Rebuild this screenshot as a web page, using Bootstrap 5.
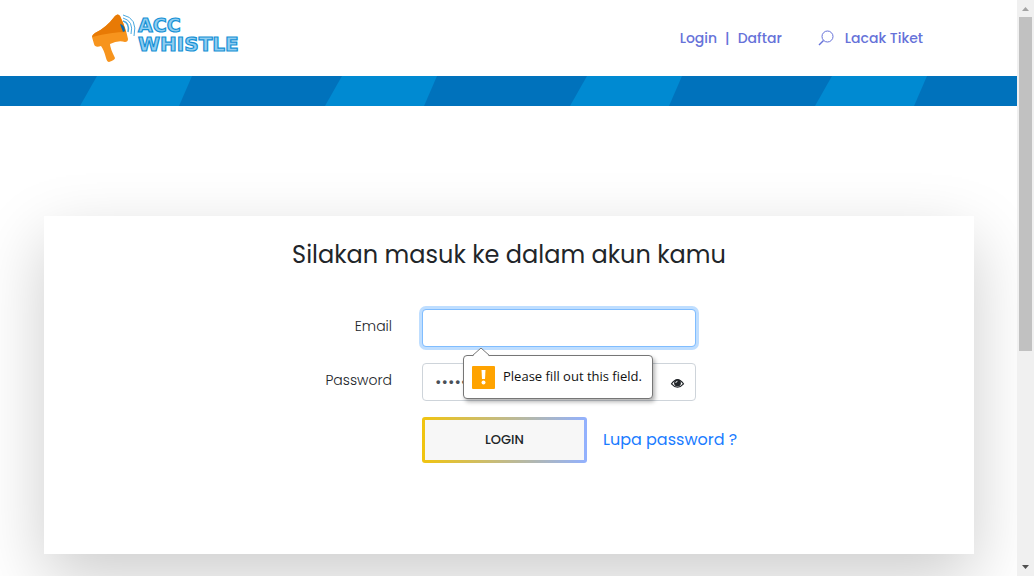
<!DOCTYPE html>
<html lang="id">
<head>
<meta charset="utf-8">
<meta name="viewport" content="width=device-width, initial-scale=1">
<title>ACC Whistle</title>
<link rel="stylesheet" href="https://cdn.jsdelivr.net/npm/bootstrap@5.3.0/dist/css/bootstrap.min.css">
<style>
  body { font-family: Poppins, Inter, sans-serif; font-size: 14px; color: #212529; background: #fff; }
  .site-header { height: 76px; padding: 0 94px 0 92px; }
  .site-header a { color: #6672d9; font-weight: 500; text-decoration: none; }
  .site-menu { color: #6672d9; font-weight: 500; }
  .stripes { height: 30px; }
  .login-panel { margin: 110px 43px 0 44px; padding: 23px 0 91px; background: #fff; box-shadow: 0 24px 64px rgba(0,0,0,.2); }
  .login-title { font-size: 24px; line-height: 32px; margin-bottom: 38px; font-weight: 400; }
  .form-line { display: grid; grid-template-columns: 363fr 304fr 263fr; margin-bottom: 16px; }
  .form-line > * { padding-left: 15px; padding-right: 15px; }
  .form-line label { text-align: right; padding-top: 7px; line-height: 21px; font-weight: 300; }
  .form-line .form-control { height: 38px; border-color: #ced4da; border-radius: 4px; font-size: 14px; font-weight: 500; color: #495057; padding: 6px 12px; }
  .form-line .is-active, .form-line .is-active:focus { border-color: #80bdff; box-shadow: 0 0 0 3px #bfdeff; }
  .actions { grid-column: 2 / 4; }
  .btn-login { width: 165px; height: 46px; border: 3px solid transparent; border-radius: 3px; font-size: 13px; font-weight: 500; color: #212529;
    background: linear-gradient(#f7f7f7, #f7f7f7) padding-box, linear-gradient(90deg, #f1c40f, #92b1ff) border-box; }
  .forgot { font-size: 16px; color: #1a7cff; text-decoration: none; }
  .eye-btn { right: 26px; top: 0; height: 40px; line-height: 0; }
  .hint { left: 56px; top: 46px; height: 44px; padding: 0 10px 0 8px; z-index: 5; background: #fff; border: 1px solid #767676; border-radius: 4px; box-shadow: 2px 3px 4px rgba(0,0,0,.3); font-family: "Open Sans", sans-serif; font-size: 13px; color: #111; white-space: nowrap; }
  .hint-arrow { left: 8px; top: -8px; }
  .scroll-rail { width: 17px; background: #f0f0f0; padding: 0 2px 0 2px; }
  .scroll-thumb { flex: 334 0 0; background: #c1c1c1; }
  .scroll-rest { flex: 208 0 0; }
  .scroll-end { height: 17px; }
</style>
</head>
<body class="d-flex vh-100 overflow-hidden">
<div class="flex-grow-1 overflow-hidden">
  <header class="site-header d-flex align-items-center justify-content-between">
    <a href="#" aria-label="ACC Whistle">
      <svg class="d-block" width="148" height="52" viewBox="0 0 148 52">
        <path d="M0 25Q0 23 3 21Q14 16 23 4Q26 1 28 4Q34 16 36 27Q36 30 33 30Q26 28 18 32Q18 36 23 46Q23 48 17 50Q15 50 14 46Q12 38 9 34Q3 36 2 32Z" fill="#f7941d"/>
        <path d="M0 25Q0 23 3 21Q14 16 23 4Q26 1 28 4Q32 12 34 20Q20 20 0 25Z" fill="#e87a05"/>
        <path d="M28 12Q33 13 33 19L31 20Z" fill="#0869ad"/>
        <g fill="none" stroke="#4aa8df"><path d="M31 9Q38 11 36 20" stroke-width="1.5"/><path d="M31 6Q42 9 39 22M31 3Q46 6 42 24"/></g>
        <g fill="#8fcdf0" stroke="#1591d6" stroke-width="1.2" font-family="DejaVu Sans, sans-serif" font-weight="700"><text x="46" y="20" font-size="19">ACC</text><text x="46" y="39" font-size="20">WHISTLE</text></g>
      </svg>
    </a>
    <nav class="site-menu d-flex align-items-center">
      <a href="#">Login</a><span class="px-2">|</span><a href="#">Daftar</a>
      <a href="#" class="d-flex align-items-center ms-4 ps-2">
        <svg class="ms-1 me-2" width="19" height="16" viewBox="0 0 19 16" fill="none" stroke="#6672d9"><circle cx="9.5" cy="6.5" r="5.5"/><path d="M5.5 10.5L1 15" stroke-width="1.5"/></svg>Lacak Tiket</a>
    </nav>
  </header>
  <svg class="stripes d-block w-100" aria-hidden="true">
    <defs><pattern id="band" width="245" height="30" patternUnits="userSpaceOnUse"><rect width="245" height="30" fill="#0072bc"/><path d="M97 0H192L179 30H80Z" fill="#008ad2"/></pattern></defs>
    <rect width="100%" height="30" fill="url(#band)"/>
  </svg>
  <main class="login-panel">
    <h1 class="login-title text-center">Silakan masuk ke dalam akun kamu</h1>
    <form novalidate>
      <div class="form-line">
        <label for="email">Email</label>
        <div class="position-relative">
          <input class="form-control is-active" id="email" type="email" aria-describedby="email-hint">
          <div class="hint position-absolute d-flex align-items-center gap-2" id="email-hint" role="tooltip">
            <svg class="hint-arrow position-absolute" width="18" height="9" viewBox="0 0 18 9"><path d="M0 9L9 0L18 9Z" fill="#fff"/><path d="M0 8L9 0L18 8" fill="none" stroke="#767676"/></svg>
            <svg width="23" height="23" viewBox="0 0 23 23"><rect width="23" height="23" rx="1" fill="#ffa300"/><path d="M9.5 4H13.5L13 13H10Z" fill="#fff"/><circle cx="11.5" cy="16.5" r="2" fill="#fff"/></svg>
            <span>Please fill out this field.</span>
          </div>
        </div>
      </div>
      <div class="form-line">
        <label for="password">Password</label>
        <div class="position-relative">
          <input class="form-control" id="password" type="password" value="password">
          <button type="button" class="eye-btn btn p-0 border-0 position-absolute" aria-label="Tampilkan password">
            <svg width="15" height="12" viewBox="0 0 16 14"><path d="M1 8Q8 -2 15 8Q8 16 1 8Z" fill="#fff" stroke="#212529" stroke-width="1.3"/><circle cx="8" cy="7" r="4" fill="#212529"/><path d="M6 7Q6 5 8 5" stroke="#fff" fill="none"/></svg>
          </button>
        </div>
      </div>
      <div class="form-line mb-0">
        <div class="actions d-flex align-items-center gap-3">
          <button type="submit" class="btn-login">LOGIN</button>
          <a class="forgot" href="#">Lupa password ?</a>
        </div>
      </div>
    </form>
  </main>
</div>
<div class="scroll-rail d-flex flex-column flex-shrink-0" aria-hidden="true">
  <svg class="scroll-end" width="13" viewBox="0 0 13 17"><path d="M3 11L6.5 7L10 11Z" fill="#a3a3a3"/></svg>
  <div class="scroll-thumb"></div>
  <div class="scroll-rest"></div>
  <svg class="scroll-end" width="13" viewBox="0 0 13 17"><path d="M3 6L6.5 10L10 6Z" fill="#505050"/></svg>
</div>
<script src="https://cdn.jsdelivr.net/npm/bootstrap@5.3.0/dist/js/bootstrap.bundle.min.js"></script>
</body>
</html>
